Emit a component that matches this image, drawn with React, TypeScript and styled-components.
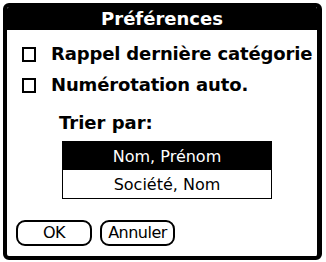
import React, { useState } from "react";
import styled, { createGlobalStyle } from "styled-components";

const Global = createGlobalStyle`
  html, body { margin: 0; padding: 0; background: #ffffff; }
  body { font-family: "DejaVu Sans", "Liberation Sans", sans-serif; }
`;

const Page = styled.div`
  width: 326px;
  height: 262px;
  padding: 3px 0 0 3px;
  box-sizing: border-box;
  background: #ffffff;
`;

const Dialog = styled.div`
  width: 319px;
  height: 257px;
  box-sizing: border-box;
  border: 4px solid #000;
  border-right-width: 5px;
  border-radius: 6px;
  background: #fff;
  display: flex;
  flex-direction: column;
  overflow: hidden;
`;

const TitleBar = styled.div`
  height: 23px;
  line-height: 23px;
  background: #000;
  color: #fff;
  text-align: center;
  font-weight: bold;
  font-size: 18px;
`;

const Content = styled.div`
  flex: 1;
  display: flex;
  flex-direction: column;
  padding: 13px 0 9px 15px;
`;

const CheckRow = styled.label<{ $gap?: number }>`
  display: flex;
  align-items: center;
  height: 22px;
  line-height: 22px;
  font-size: 18px;
  font-weight: bold;
  letter-spacing: -0.15px;
  white-space: nowrap;
  color: #000;
  margin-bottom: ${(p) => p.$gap ?? 0}px;
  cursor: pointer;
`;

const Box = styled.span<{ $on: boolean }>`
  width: 14px;
  height: 15px;
  box-sizing: border-box;
  border: 2px solid #000;
  margin-right: 15px;
  flex: none;
  background: ${(p) => (p.$on ? "#000" : "#fff")};
`;

const Label = styled.div`
  height: 22px;
  line-height: 22px;
  font-size: 18px;
  font-weight: bold;
  margin: 16px 0 7px 37px;
`;

const List = styled.div`
  width: 208px;
  margin-left: 40px;
  border: 1px solid #000;
  display: flex;
  flex-direction: column;
`;

const ListItem = styled.div<{ $selected: boolean }>`
  height: 28px;
  box-sizing: border-box;
  padding-top: 2px;
  line-height: 26px;
  text-align: center;
  font-size: 16px;
  background: ${(p) => (p.$selected ? "#000" : "#fff")};
  color: ${(p) => (p.$selected ? "#fff" : "#000")};
  cursor: pointer;
`;

const Buttons = styled.div`
  display: flex;
  gap: 8px;
  margin: 21px 0 0 -6px;
`;

const Button = styled.button<{ $w: number }>`
  width: ${(p) => p.$w}px;
  height: 26px;
  box-sizing: border-box;
  border: 2px solid #000;
  border-radius: 9px;
  background: #fff;
  padding: 0;
  font-family: "DejaVu Sans", "Liberation Sans", sans-serif;
  font-size: 16px;
  line-height: 22px;
  color: #000;
  letter-spacing: -0.5px;
`;

export default function App() {
  const [rappel, setRappel] = useState(false);
  const [numero, setNumero] = useState(false);
  const [sel, setSel] = useState(0);
  const items = ["Nom, Prénom", "Société, Nom"];
  return (
    <Page>
      <Global />
      <Dialog>
        <TitleBar>Préférences</TitleBar>
        <Content>
          <CheckRow $gap={9} onClick={() => setRappel(!rappel)}>
            <Box $on={rappel} />
            Rappel dernière catégorie
          </CheckRow>
          <CheckRow onClick={() => setNumero(!numero)}>
            <Box $on={numero} />
            Numérotation auto.
          </CheckRow>
          <Label>Trier par:</Label>
          <List>
            {items.map((t, i) => (
              <ListItem key={t} $selected={sel === i} onClick={() => setSel(i)}>
                {t}
              </ListItem>
            ))}
          </List>
          <Buttons>
            <Button $w={76}>OK</Button>
            <Button $w={75}>Annuler</Button>
          </Buttons>
        </Content>
      </Dialog>
    </Page>
  );
}
